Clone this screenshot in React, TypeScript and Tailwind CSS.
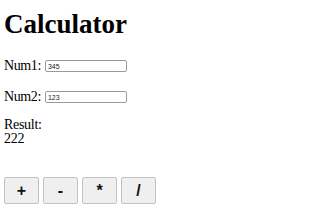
export default function App() {
  const ops = ['+', '-', '*', '/']

  return (
    <div className="min-h-screen bg-white px-[4px] pt-[9px] font-['Liberation_Serif',serif] text-black">
      <h1 className="text-[27px] font-bold leading-[30px]">Calculator</h1>

      <div className="mt-[20px] flex items-center gap-[4px]">
        <label className="text-[14px] leading-[14px] tracking-[-0.4px]">Num1:</label>
        <input
          readOnly
          value="345"
          className="h-[12px] w-[82px] rounded-[2px] border border-[#9a9a9a] px-[2px] font-['Liberation_Sans',sans-serif] text-[7px] leading-[10px] text-[#222] outline-none"
        />
      </div>

      <div className="mt-[17px] flex items-center gap-[4px]">
        <label className="text-[14px] leading-[14px] tracking-[-0.4px]">Num2:</label>
        <input
          readOnly
          value="123"
          className="h-[12px] w-[82px] rounded-[2px] border border-[#9a9a9a] px-[2px] font-['Liberation_Sans',sans-serif] text-[7px] leading-[10px] text-[#222] outline-none"
        />
      </div>

      <div className="mt-[14px] text-[14px] leading-[14px] tracking-[-0.3px]">
        <div>Result:</div>
        <div>222</div>
      </div>

      <div className="mt-[31px] flex gap-[4px]">
        {ops.map((op) => (
          <button
            key={op}
            className="flex h-[27px] w-[35px] items-center justify-center rounded-[2px] border border-[#c2c2c2] bg-[#efefef] font-['Liberation_Sans',sans-serif] text-[16px] font-bold text-[#111]"
          >
            {op}
          </button>
        ))}
      </div>
    </div>
  )
}
